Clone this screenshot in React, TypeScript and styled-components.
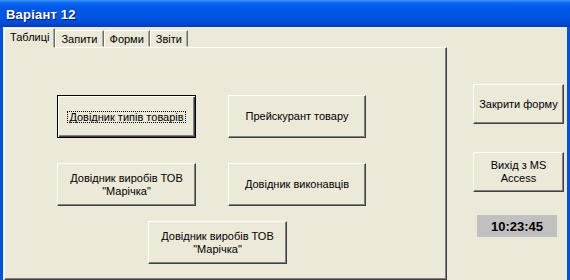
import React from 'react';
import styled, { createGlobalStyle, css } from 'styled-components';

const GlobalStyle = createGlobalStyle`
  html, body {
    margin: 0;
    padding: 0;
    background: #ece9d8;
  }
  body {
    font-family: "Liberation Sans", Arial, sans-serif;
    font-size: 11px;
    color: #000;
  }
`;

const Window = styled.div`
  width: 570px;
  height: 280px;
  display: flex;
  flex-direction: column;
  overflow: hidden;
  background: #0054e3;
`;

const TitleBar = styled.div`
  height: 27px;
  flex-shrink: 0;
  display: flex;
  align-items: center;
  padding-left: 6px;
  padding-top: 2px;
  box-sizing: border-box;
  background: linear-gradient(
    to bottom,
    #3d95ff 0px,
    #0a66f0 3px,
    #0058e8 8px,
    #0054e3 18px,
    #0048d0 24px,
    #003cb8 27px
  );
  color: #fff;
  font-size: 13px;
  font-weight: bold;
  letter-spacing: 0.2px;
  text-shadow: 1px 1px 0 #0a1e6e;
`;

const Body = styled.div`
  flex: 1;
  display: flex;
  margin: 0 3px;
  background: #ece9d8;
`;

const TabControl = styled.div`
  width: 443px;
  margin: 1px 0 0 1px;
  display: flex;
  flex-direction: column;
  flex-shrink: 0;
`;

const TabStrip = styled.div`
  height: 19px;
  display: flex;
  align-items: flex-end;
  position: relative;
  z-index: 1;
`;

const Tab = styled.div<{ $active?: boolean }>`
  box-sizing: border-box;
  height: 17px;
  padding: 1px 5px 0 5px;
  display: flex;
  align-items: center;
  border: 1px solid;
  border-color: #fff #716f64 transparent #fff;
  box-shadow: inset -1px 0 #aca899;
  background: #ece9d8;
  ${(p) =>
    p.$active &&
    css`
      height: 20px;
      margin-bottom: -1px;
      padding: 0 5px 2px 5px;
      border-bottom: 1px solid #ece9d8;
    `}
`;

const Panel = styled.div`
  flex: 1;
  box-sizing: border-box;
  border: 1px solid;
  border-color: #fff #404040 #404040 #fff;
  box-shadow: inset -1px -1px #808080;
  padding: 47px 0 0 52px;
  display: flex;
  flex-direction: column;
`;

const ButtonRow = styled.div<{ $gap: number; $indent?: number }>`
  display: flex;
  gap: 32px;
  margin-top: ${(p) => p.$gap}px;
  margin-left: ${(p) => p.$indent ?? 0}px;
`;

const Button = styled.div<{ $w: number; $h: number; $default?: boolean }>`
  box-sizing: border-box;
  width: ${(p) => p.$w}px;
  height: ${(p) => p.$h}px;
  display: flex;
  align-items: center;
  justify-content: center;
  text-align: center;
  line-height: 13px;
  background: #ece9d8;
  border: 1px solid;
  border-color: #fff #404040 #404040 #fff;
  box-shadow: inset -1px -1px #808080;
  ${(p) =>
    p.$default &&
    css`
      border-color: #000;
      box-shadow: inset 1px 1px #fff, inset -1px -1px #404040, inset -2px -2px #808080;
    `}
`;

const FocusLabel = styled.span`
  border: 1px dotted #000;
  padding: 0 1px;
  line-height: 10px;
`;

const SideColumn = styled.div`
  display: flex;
  flex-direction: column;
  padding: 57px 0 0 26px;
  gap: 28px;
`;

const Clock = styled.div`
  width: 80px;
  height: 22px;
  margin: -5px 0 0 4px;
  background: #c0c0c0;
  display: flex;
  align-items: center;
  justify-content: center;
  font-size: 13px;
  font-weight: bold;
`;

export default function App() {
  return (
    <>
      <GlobalStyle />
      <Window>
        <TitleBar>Варіант 12</TitleBar>
        <Body>
          <TabControl>
            <TabStrip>
              <Tab $active>Таблиці</Tab>
              <Tab>Запити</Tab>
              <Tab>Форми</Tab>
              <Tab>Звіти</Tab>
            </TabStrip>
            <Panel>
              <ButtonRow $gap={0}>
                <Button $w={139} $h={43} $default>
                  <FocusLabel>Довідник типів товарів</FocusLabel>
                </Button>
                <Button $w={138} $h={43}>
                  Прейскурант товару
                </Button>
              </ButtonRow>
              <ButtonRow $gap={25}>
                <Button $w={139} $h={43}>
                  Довідник виробів ТОВ
                  <br />
                  "Марічка"
                </Button>
                <Button $w={138} $h={43}>
                  Довідник виконавців
                </Button>
              </ButtonRow>
              <ButtonRow $gap={15} $indent={91}>
                <Button $w={139} $h={43}>
                  Довідник виробів ТОВ
                  <br />
                  "Марічка"
                </Button>
              </ButtonRow>
            </Panel>
          </TabControl>
          <SideColumn>
            <Button $w={91} $h={40}>
              Закрити форму
            </Button>
            <Button $w={91} $h={40}>
              Вихід з MS
              <br />
              Access
            </Button>
            <Clock>10:23:45</Clock>
          </SideColumn>
        </Body>
      </Window>
    </>
  );
}
